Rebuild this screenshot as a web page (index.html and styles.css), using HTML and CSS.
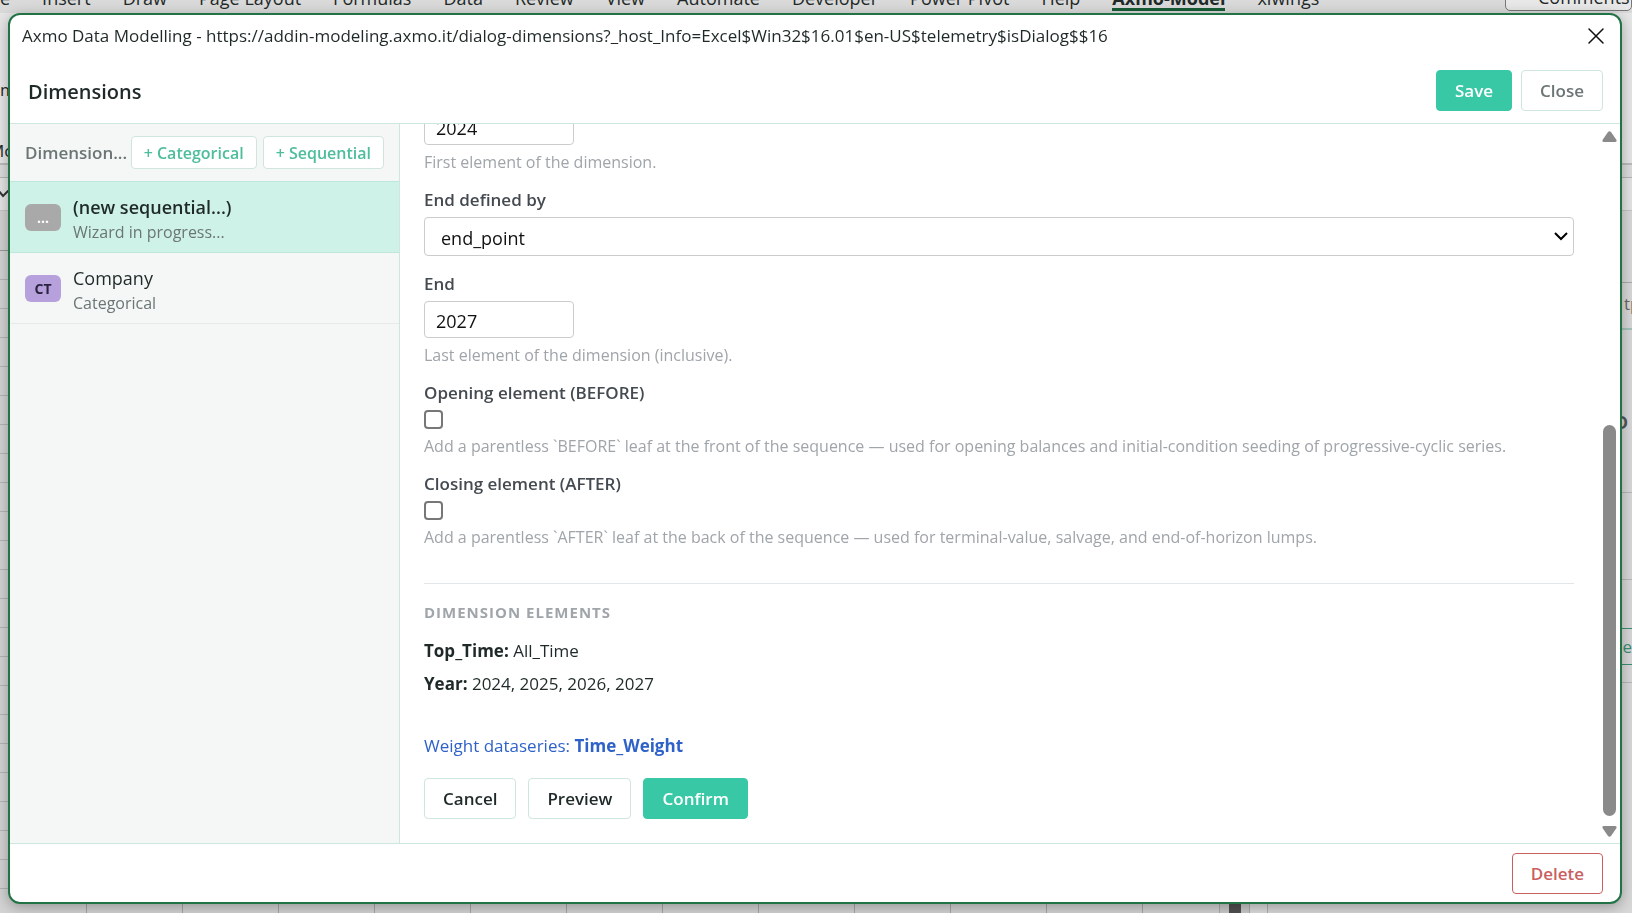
FILE: index.html
```
<!DOCTYPE html>
<html lang="en">
<head>
  <meta charset="UTF-8" />
  <title>Axmo Data Modelling - Dimensions</title>
  <link rel="stylesheet" href="styles.css">
</head>
<body>
  <!-- Workbook behind the dialog -->
  <div class="workbook">
    <div class="ribbon-tabs">
      <span class="tab">e</span>
      <span class="tab">Insert</span>
      <span class="tab">Draw</span>
      <span class="tab">Page Layout</span>
      <span class="tab">Formulas</span>
      <span class="tab">Data</span>
      <span class="tab">Review</span>
      <span class="tab">View</span>
      <span class="tab">Automate</span>
      <span class="tab">Developer</span>
      <span class="tab">Power Pivot</span>
      <span class="tab">Help</span>
      <span class="tab active">Axmo-Model</span>
      <span class="tab">xlwings</span>
      <span class="comments">Comments</span>
    </div>
    <div class="ribbon">
      <span>m</span>
      <span class="cut">Mo</span>
    </div>
    <div class="formula-bar">
      <svg width="10" height="8" viewBox="0 0 10 8"><path d="M-2 0 L3 6 L9 0" fill="none" stroke="#333" stroke-width="2"/></svg>
    </div>
    <div class="workbook-body">
      <div class="sheet">
        <div class="column-head"></div>
        <div class="cells"></div>
      </div>
      <div class="sheet-scroll"><div class="sheet-thumb"></div></div>
      <div class="task-pane">
        <div class="pane-top"></div>
        <div class="pane-tabs">tp</div>
        <div class="pane-title">D</div>
        <div class="pane-row"></div>
        <div class="pane-actions"><span class="pane-button">e</span></div>
      </div>
    </div>
  </div>

  <div class="dialog" role="dialog" aria-labelledby="dialogTitle">
    <div class="title-bar">
      <span>Axmo Data Modelling - https://addin-modeling.axmo.it/dialog-dimensions?_host_Info=Excel$Win32$16.01$en-US$telemetry$isDialog$$16</span>
      <button class="window-close" aria-label="Close window">
        <svg width="16" height="16" viewBox="0 0 16 16"><path d="M1 1 L15 15 M15 1 L1 15" stroke="#111" stroke-width="1.5" stroke-linecap="round"/></svg>
      </button>
    </div>

    <header class="header">
      <h1 id="dialogTitle">Dimensions</h1>
      <div class="header-actions">
        <button class="btn primary">Save</button>
        <button class="btn muted">Close</button>
      </div>
    </header>

    <div class="content">
      <aside class="sidebar">
        <div class="sidebar-header">
          <h2>Dimension...</h2>
          <button class="add-btn">+ Categorical</button>
          <button class="add-btn">+ Sequential</button>
        </div>
        <ul class="dimension-list">
          <li class="selected">
            <span class="badge pending">...</span>
            <div class="item-text">
              <div class="name">(new sequential...)</div>
              <div class="kind">Wizard in progress...</div>
            </div>
          </li>
          <li>
            <span class="badge">CT</span>
            <div class="item-text">
              <div class="name">Company</div>
              <div class="kind">Categorical</div>
            </div>
          </li>
        </ul>
      </aside>

      <main class="main">
        <form class="wizard">
          <div class="field">
            <input type="text" id="start" aria-label="Start" value="2024" />
            <p class="hint">First element of the dimension.</p>
          </div>
          <div class="field">
            <label for="endDefinedBy">End defined by</label>
            <div class="select-wrap">
              <select id="endDefinedBy">
                <option selected>end_point</option>
              </select>
              <svg class="chevron" width="14" height="9" viewBox="0 0 14 9"><path d="M1 1 L7 7 L13 1" fill="none" stroke="#000" stroke-width="2"/></svg>
            </div>
          </div>
          <div class="field">
            <label for="end">End</label>
            <input type="text" id="end" value="2027" />
            <p class="hint">Last element of the dimension (inclusive).</p>
          </div>
          <div class="field">
            <label for="before">Opening element (BEFORE)</label>
            <input type="checkbox" id="before" />
            <p class="hint">Add a parentless `BEFORE` leaf at the front of the sequence — used for opening balances and initial-condition seeding of progressive-cyclic series.</p>
          </div>
          <div class="field">
            <label for="after">Closing element (AFTER)</label>
            <input type="checkbox" id="after" />
            <p class="hint">Add a parentless `AFTER` leaf at the back of the sequence — used for terminal-value, salvage, and end-of-horizon lumps.</p>
          </div>

          <section class="elements">
            <h3>Dimension elements</h3>
            <p><b>Top_Time:</b> All_Time</p>
            <p><b>Year:</b> 2024, 2025, 2026, 2027</p>
          </section>

          <p class="weight">Weight dataseries: <b>Time_Weight</b></p>

          <div class="actions">
            <button type="button" class="btn">Cancel</button>
            <button type="button" class="btn">Preview</button>
            <button type="button" class="btn primary">Confirm</button>
          </div>
        </form>

        <div class="scrollbar">
          <svg width="15" height="11" viewBox="0 0 15 11"><path d="M6 1 Q7.500 -0.500 9 1 L14.500 9 Q15 11 13 11 L2 11 Q0 11 0.500 9 Z" fill="#8a8a8a"/></svg>
          <div class="track"><div class="thumb"></div></div>
          <svg width="15" height="11" viewBox="0 0 15 11"><path d="M6 10 Q7.500 11.500 9 10 L14.500 2 Q15 0 13 0 L2 0 Q0 0 0.500 2 Z" fill="#8a8a8a"/></svg>
        </div>
      </main>
    </div>

    <footer class="footer">
      <button class="btn danger">Delete</button>
    </footer>
  </div>
</body>
</html>
```

FILE: styles.css
```
* {
  box-sizing: border-box;
}
body {
  margin: 0;
  height: 100vh;
  overflow: hidden;
  font-family: 'Segoe UI', 'Open Sans', sans-serif;
  font-size: 17px;
  line-height: 24px;
  color: #1f2a28;
  background: #dcdcdc;
}
h1, h2, h3, p, ul {
  margin: 0;
  padding: 0;
}
button, input, select {
  font: inherit;
}

/* Workbook */
.workbook {
  display: flex;
  flex-direction: column;
  height: 100%;
}
.ribbon-tabs {
  display: flex;
  align-items: flex-end;
  gap: 32px;
  height: 13px;
  padding-bottom: 2px;
  font-size: 18px;
  line-height: 26px;
  white-space: nowrap;
  background: #dadada;
}
.tab.active {
  font-weight: 700;
  box-shadow: inset 0 -3px #185c37;
}
.comments {
  margin-left: auto;
  width: 127px;
  padding-left: 32px;
  border: 1px solid #777;
  border-radius: 5px;
  background: #e8e8e8;
}
.ribbon {
  display: flex;
  flex-direction: column;
  justify-content: flex-end;
  gap: 37px;
  height: 152px;
  background: #e6e6e6;
  border-bottom: 2px solid #bbb;
}
.ribbon .cut {
  text-indent: -11px;
}
.formula-bar {
  display: flex;
  align-items: center;
  height: 34px;
  margin-top: 12px;
  background: #e4e4e4;
  border-top: 1px solid #b5b5b5;
  border-bottom: 1px solid #c4c4c4;
}
.workbook-body {
  display: flex;
  flex: 1;
}
.sheet {
  display: flex;
  flex-direction: column;
  flex: 1;
}
.column-head {
  height: 40px;
  background: #d2d2d2;
  border-bottom: 1px solid #999;
}
.cells {
  flex: 1;
  background-color: #d4d3d3;
  background-image:
    repeating-linear-gradient(to bottom, transparent 0 28px, #b4b4b4 28px 29px),
    repeating-linear-gradient(to right, transparent 0 95px, #a6a6a6 95px 96px);
  background-position: 0 0, -9px 0;
}
.sheet-scroll {
  display: flex;
  align-items: flex-end;
  justify-content: center;
  width: 31px;
  margin-right: 17px;
  background: #cacaca;
  border-left: 1px solid #aaa;
  border-right: 1px solid #aaa;
}
.sheet-thumb {
  width: 12px;
  height: 300px;
  background: #505050;
}
.task-pane {
  width: 365px;
  text-align: right;
  background: #d8d8d8;
  border-left: 1px solid #b0b0b0;
}
.pane-top {
  height: 72px;
  border-bottom: 1px solid #aaa;
}
.pane-tabs {
  height: 47px;
  padding: 9px 0 0 356px;
  text-align: left;
  color: #666;
  border-bottom: 2px solid #a3c4b8;
}
.pane-title {
  height: 163px;
  padding: 81px 4px 0 0;
  font-weight: 700;
  color: #555;
  border-bottom: 1px solid #b8b8b8;
}
.pane-row {
  height: 87px;
  border-bottom: 1px solid #b8b8b8;
}
.pane-actions {
  height: 103px;
  padding-top: 48px;
  border-bottom: 1px solid #b8b8b8;
}
.pane-button {
  display: block;
  height: 37px;
  line-height: 35px;
  color: #3a8f75;
  border: 1px solid #3a8f75;
  border-right: none;
}

/* Dialog window */
.dialog {
  position: fixed;
  inset: 13px 10px 9px 8px;
  display: flex;
  flex-direction: column;
  overflow: hidden;
  background: #fff;
  border: 2px solid #217346;
  border-radius: 12px;
  box-shadow: 0 3px 14px rgba(0, 0, 0, 0.3);
}
.title-bar {
  display: flex;
  align-items: center;
  justify-content: space-between;
  height: 42px;
  padding: 0 16px 0 12px;
}
.title-bar span {
  white-space: nowrap;
}
.window-close {
  display: flex;
  padding: 0;
  border: none;
  background: none;
  cursor: pointer;
}
.header {
  display: flex;
  align-items: center;
  justify-content: space-between;
  padding: 13px 17px 12px 18px;
  border-bottom: 1px solid #cfe6de;
}
.header h1 {
  font-size: 20px;
  line-height: 28px;
  padding-top: 2px;
  font-weight: 600;
}
.header-actions {
  display: flex;
  gap: 9px;
}
.btn {
  height: 41px;
  padding: 0 18px;
  color: #1f2a28;
  font-weight: 600;
  background: #fff;
  border: 1px solid #cfe6de;
  border-radius: 4px;
  cursor: pointer;
}
.btn.primary {
  color: #fff;
  background: #38c8a6;
  border-color: #38c8a6;
}
.btn.muted {
  color: #6b7674;
}
.btn.danger {
  color: #c9605f;
  border-color: #c9605f;
}
.content {
  display: flex;
  flex: 1;
  min-height: 0;
}

/* Sidebar */
.sidebar {
  width: 390px;
  flex-shrink: 0;
  background: #f5f7f7;
  border-right: 1px solid #cfe6de;
}
.sidebar-header {
  display: flex;
  align-items: center;
  gap: 6px;
  height: 58px;
  padding: 0 15px;
  border-bottom: 1px solid #bfe6da;
}
.sidebar-header h2 {
  flex: 1;
  min-width: 0;
  white-space: nowrap;
  font-size: 17px;
  font-weight: 600;
  color: #6b7674;
}
.add-btn {
  height: 33px;
  padding: 0 12px;
  font-size: 16px;
  font-weight: 600;
  color: #4dbd9c;
  background: #fff;
  border: 1px solid #cfe6de;
  border-radius: 4px;
  cursor: pointer;
}
.dimension-list {
  list-style: none;
}
.dimension-list li {
  display: flex;
  align-items: center;
  gap: 12px;
  height: 71px;
  padding: 0 15px;
  border-bottom: 1px solid #e6ebea;
}
.dimension-list li.selected {
  background: #cff2e8;
  border-color: #bfe6da;
}
.badge {
  width: 36px;
  height: 27px;
  line-height: 27px;
  text-align: center;
  font-size: 14px;
  font-weight: 700;
  color: #2a2340;
  background: #b7a1dc;
  border-radius: 6px;
}
.badge.pending {
  color: #fff;
  background: #a9a9a9;
}
.item-text {
  padding-top: 4px;
}
.name {
  font-size: 18px;
  line-height: 26px;
}
.selected .name {
  font-weight: 600;
}
.kind {
  font-size: 16px;
  color: #6b7674;
}

/* Wizard form */
.main {
  display: flex;
  flex: 1;
  min-width: 0;
  overflow: hidden;
}
.wizard {
  display: flex;
  flex-direction: column;
  justify-content: flex-end;
  flex: 1;
  min-width: 0;
  padding: 0 27px 24px 24px;
}
.field {
  display: flex;
  flex-direction: column;
  align-items: flex-start;
  margin-bottom: 15px;
}
.field label {
  line-height: 26px;
  margin-bottom: 4px;
  font-weight: 600;
  color: #444a50;
}
.field input[type="text"] {
  width: 150px;
  height: 37px;
  padding: 2px 11px 0;
  font-size: 18px;
  color: #111;
  background: #fff;
  border: 1px solid #ccc;
  border-radius: 4px;
}
.field input[type="checkbox"] {
  width: 19px;
  height: 19px;
  margin: 0;
  appearance: none;
  background: #fff;
  border: 2px solid #777;
  border-radius: 4px;
}
.select-wrap {
  position: relative;
  width: 100%;
}
.select-wrap select {
  display: block;
  width: 100%;
  height: 39px;
  padding: 2px 16px 0;
  font-size: 18px;
  color: #111;
  background: #fff;
  border: 1px solid #ccc;
  border-radius: 4px;
  appearance: none;
}
.chevron {
  position: absolute;
  top: 15px;
  right: 6px;
  pointer-events: none;
}
.hint {
  margin-top: 7px;
  font-size: 16px;
  line-height: 20px;
  color: #a0a5aa;
}
.elements {
  margin-top: 21px;
  padding-top: 16px;
  border-top: 1px solid #e3e6e8;
}
.elements h3 {
  margin-bottom: 10px;
  font-size: 15px;
  font-weight: 700;
  letter-spacing: 1px;
  text-transform: uppercase;
  color: #a0a5aa;
}
.elements p {
  line-height: 33px;
}
.weight {
  margin: 34px 0 20px;
  color: #2f62c9;
}
.actions {
  display: flex;
  gap: 12px;
}
.scrollbar {
  display: flex;
  flex-direction: column;
  align-items: center;
  width: 19px;
  padding: 7px 3px 6px 0;
}
.track {
  flex: 1;
  display: flex;
  flex-direction: column;
  justify-content: flex-end;
  width: 13px;
  padding-bottom: 10px;
}
.thumb {
  height: 58%;
  background: #8a8a8a;
  border-radius: 7px;
}
.footer {
  display: flex;
  justify-content: flex-end;
  padding: 9px 17px 8px;
  border-top: 1px solid #cfe6de;
}
```
